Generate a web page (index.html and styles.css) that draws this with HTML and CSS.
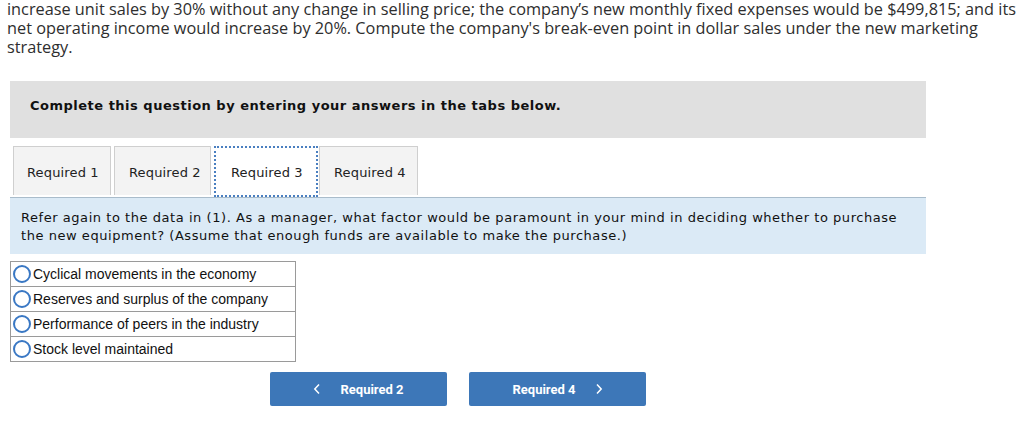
FILE: index.html
```html
<!DOCTYPE html>
<html>
<head>
<meta charset="utf-8">
<link rel="stylesheet" href="styles.css">
</head>
<body>
<p class="intro">increase unit sales by 30% without any change in selling price; the company’s new monthly fixed expenses would be $499,815; and its net operating income would increase by 20%. Compute the company's break-even point in dollar sales under the new marketing strategy.</p>

<div class="instructions">Complete this question by entering your answers in the tabs below.</div>

<div class="tabs">
  <div class="tab">Required 1</div>
  <div class="tab">Required 2</div>
  <div class="tab active">Required 3</div>
  <div class="tab">Required 4</div>
</div>

<div class="panel">Refer again to the data in (1). As a manager, what factor would be paramount in your mind in deciding whether to purchase the new equipment? (Assume that enough funds are available to make the purchase.)</div>

<div class="options">
  <div class="option"><span class="radio"></span>Cyclical movements in the economy</div>
  <div class="option"><span class="radio"></span>Reserves and surplus of the company</div>
  <div class="option"><span class="radio"></span>Performance of peers in the industry</div>
  <div class="option"><span class="radio"></span>Stock level maintained</div>
</div>

<div class="nav">
  <div class="btn"><svg class="chev" width="8" height="12" viewBox="0 0 8 12"><path d="M6 1.5 L1.8 6 L6 10.5" fill="none" stroke="#fff" stroke-width="1.5"/></svg><span>Required 2</span></div>
  <div class="btn"><span>Required 4</span><svg class="chev" width="8" height="12" viewBox="0 0 8 12"><path d="M2 1.5 L6.2 6 L2 10.5" fill="none" stroke="#fff" stroke-width="1.5"/></svg></div>
</div>
</body>
</html>
```
FILE: styles.css
```css
body {
  margin: 0;
  background: #fff;
  color: #222;
}
.intro {
  margin: 0;
  padding: 0 7px;
  font-family: "Open Sans", "Lato", sans-serif;
  font-size: 16.3px;
  line-height: 19px;
  color: #2e2e2e;
}
.instructions {
  margin: 24px 98px 0 10px;
  height: 57px;
  box-sizing: border-box;
  background: #e0e0e0;
  padding: 0 0 9px 20px;
  display: flex;
  align-items: center;
  font-family: "DejaVu Sans", Verdana, sans-serif;
  font-weight: bold;
  font-size: 13px;
  letter-spacing: 0.5px;
  color: #111;
}
.tabs {
  display: flex;
  gap: 3px;
  margin: 8px 0 0 13px;
  font-family: "DejaVu Sans", Verdana, sans-serif;
  font-size: 13px;
  letter-spacing: 0.15px;
  color: #222;
}
.tab {
  height: 49px;
  box-sizing: border-box;
  padding: 2px 0 0 13px;
  display: flex;
  align-items: center;
  background: #f3f3f3;
  border: 1px solid #cfcfcf;
  border-bottom: none;
}
.tab:nth-child(1) { width: 98px; }
.tab:nth-child(2) { width: 97px; padding-left: 14px; }
.tab:nth-child(3) {
  width: 104px;
  background: #fff;
  border: 2px dotted #4a7fc0;
  height: 51px;
  padding-left: 15px;
}
.tab:nth-child(4) { width: 99px; margin-left: -2px; padding-left: 14px; }
.panel {
  margin: 0 98px 0 10px;
  background: #dbeaf6;
  border-top: 1px solid #a9bccb;
  padding: 11px 11px 9px;
  font-family: "DejaVu Sans", Verdana, sans-serif;
  font-size: 13px;
  letter-spacing: 0.55px;
  line-height: 18px;
  color: #111;
  height: 36px;
}
.options {
  margin: 7px 0 0 10px;
  width: 284px;
  border: 1px solid #9a9a9a;
  font-family: "Liberation Sans", Arial, sans-serif;
  font-size: 14px;
  color: #111;
}
.option {
  height: 24px;
  display: flex;
  align-items: center;
  border-top: 1px solid #9a9a9a;
}
.option:first-child { border-top: none; }
.radio {
  width: 18px;
  height: 18px;
  border: 2px solid #3a78c4;
  border-radius: 50%;
  box-sizing: border-box;
  margin: 0 2px 0 2px;
  flex: none;
}
.nav {
  display: flex;
  gap: 22px;
  margin: 10px 0 0 270px;
}
.btn {
  width: 177px;
  height: 34px;
  background: #3d77b8;
  border-radius: 2px;
  display: flex;
  align-items: center;
  justify-content: center;
  gap: 19px;
  color: #fff;
  font-family: "Roboto", "Open Sans", sans-serif;
  font-weight: bold;
  font-size: 13px;
}
```
